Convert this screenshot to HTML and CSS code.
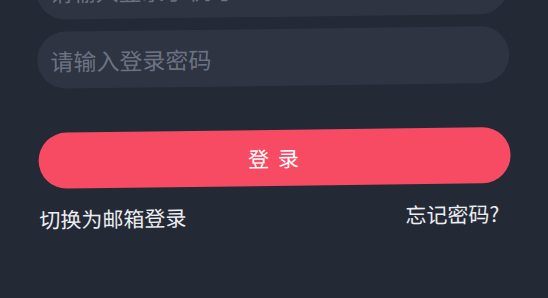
FILE: index.html
```html
<!DOCTYPE html>
<html lang="zh-CN">
	<head>
		<meta charset="UTF-8" />
		<meta name="viewport" content="width=device-width, initial-scale=1.0" />
		<title>登录</title>
		<link rel="stylesheet" href="styles.css">
	</head>
	<body>
		<form class="login" novalidate>
			<div class="wrap-input">
				<input type="text" name="phone" placeholder="请输入登录手机号" />
			</div>
			<div class="wrap-input">
				<input type="password" name="password" placeholder="请输入登录密码" />
			</div>

			<button type="submit" class="btn-login">登 录</button>

			<div class="links">
				<a href="#">切换为邮箱登录</a>
				<a href="#">忘记密码?</a>
			</div>
		</form>
	</body>
</html>
```

FILE: styles.css
```css
* {
	margin: 0;
	padding: 0;
	box-sizing: border-box;
}

body {
	background-color: #242936;
	height: 100vh;
	overflow: hidden;
	font-family: "Noto Sans CJK SC", "Noto Sans", sans-serif;
}

.login {
	width: 472px;
	margin: -37px 0 0 36px;
	display: flex;
	flex-direction: column;
	transform: rotate(-0.75deg);
	transform-origin: left top;
}

.wrap-input {
	padding-bottom: 12px;
}

input {
	appearance: none;
	width: 100%;
	height: 57px;
	border: none;
	outline: none;
	border-radius: 29px;
	background-color: #2e3442;
	padding: 0 13px;
	font-family: inherit;
	font-size: 23px;
	color: #e6e7ea;
}

input::placeholder {
	color: #6d7282;
}

.btn-login {
	margin-top: 32px;
	height: 56px;
	border: none;
	border-radius: 28px;
	background-color: #f64b63;
	color: #fff;
	font-family: inherit;
	font-size: 21px;
	letter-spacing: 2px;
	cursor: pointer;
}

.links {
	display: flex;
	justify-content: space-between;
	align-items: center;
	padding: 15px 12px 0 0;
}

.links a {
	color: #eceef1;
	text-decoration: none;
	font-size: 21px;
}
```
